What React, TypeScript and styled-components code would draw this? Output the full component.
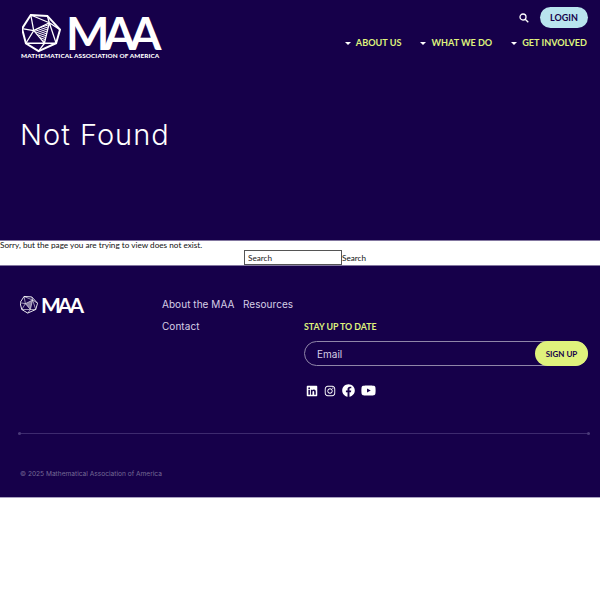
import React from 'react';
import styled, { createGlobalStyle } from 'styled-components';
import { FaFacebook, FaInstagram, FaLinkedin, FaYoutube } from 'react-icons/fa';

const PURPLE = '#16004a';
const LIME = '#dff27c';

const GlobalStyle = createGlobalStyle`
  html, body {
    margin: 0;
    background: #fff;
    font-family: Inter, 'Liberation Sans', sans-serif;
  }
  * {
    box-sizing: border-box;
  }
`;

const Header = styled.header`
  height: 240px;
  background: ${PURPLE};
  padding: 7px 12px 0 21px;
`;

const TopRow = styled.div`
  display: flex;
  justify-content: space-between;
  align-items: flex-start;
`;

const LogoLink = styled.a`
  display: flex;
  flex-direction: column;
  margin-top: 8px;
  color: #fff;
`;

const LogoMark = styled.div`
  display: flex;
  align-items: center;
  height: 37px;
  gap: 5px;
  padding-left: 1px;
`;

const LogoWord = styled.span<{ $size: number; $tight: number }>`
  display: block;
  font-family: Lato, 'Liberation Sans', sans-serif;
  font-weight: 700;
  font-size: ${({ $size }) => $size}px;
  line-height: 0.74;
  letter-spacing: ${({ $tight }) => $tight}px;
  color: #fff;
`;

const LogoTagline = styled.span`
  font-family: Lato, sans-serif;
  font-weight: 900;
  font-size: 6.4px;
  line-height: 8px;
  letter-spacing: 0.1px;
  white-space: nowrap;
`;

const NavColumn = styled.div`
  display: flex;
  flex-direction: column;
  align-items: flex-end;
`;

const UtilityRow = styled.div`
  display: flex;
  align-items: center;
  gap: 11px;
`;

const LoginButton = styled.button`
  width: 48px;
  height: 21px;
  padding: 0;
  border: none;
  border-radius: 11px;
  background: #b9e4ee;
  color: ${PURPLE};
  font-family: Lato, sans-serif;
  font-weight: 700;
  font-size: 9px;
`;

const NavList = styled.nav`
  display: flex;
  gap: 19px;
  margin-top: 8px;
  padding-right: 1px;
`;

const NavItem = styled.a`
  display: flex;
  align-items: center;
  gap: 5px;
  color: ${LIME};
  font-family: Lato, sans-serif;
  font-weight: 700;
  font-size: 9.1px;
  line-height: 14px;
  white-space: nowrap;

  &::before {
    content: '';
    border-left: 3px solid transparent;
    border-right: 3px solid transparent;
    border-top: 3px solid #fff;
  }
`;

const Title = styled.h1`
  margin: 55px 0 0 -1px;
  color: #fff;
  font-family: Inter, sans-serif;
  font-weight: 300;
  font-size: 29px;
  line-height: 40px;
  letter-spacing: 1px;
`;

const Main = styled.main`
  height: 26px;
  border-top: 1px solid #8377a0;
  border-bottom: 1px solid #8377a0;
  background: #fff;
  font-family: Lato, sans-serif;
  font-size: 8.2px;
  color: #111;
`;

const Message = styled.p`
  margin: 0;
  line-height: 9px;
`;

const SearchForm = styled.form`
  display: flex;
  align-items: center;
  height: 15px;
  padding-left: 244px;
`;

const SearchInput = styled.input`
  width: 98px;
  height: 15px;
  border: 1px solid #555;
  padding: 0 3px;
  font: inherit;
  background: #fff;
  &::placeholder {
    color: #222;
    opacity: 1;
  }
`;

const Footer = styled.footer`
  height: 232px;
  background: ${PURPLE};
  border-bottom: 1px solid #a9a1c0;
  padding: 30px 12px 0 20px;
`;

const FooterTop = styled.div`
  display: grid;
  grid-template-columns: 142px 142px 1fr;
  grid-template-rows: 22px 22px auto;
`;

const FooterLogo = styled.div`
  display: flex;
  align-items: center;
  gap: 3px;
  height: 18px;
  grid-row: 1;
  grid-column: 1;
`;

const FooterLinks = styled.div`
  display: grid;
  grid-column: 2 / 4;
  grid-row: 1;
  grid-template-columns: 81px auto;
  justify-content: start;
`;

const FooterLink = styled.a`
  display: block;
  color: #d6cfe6;
  font-family: Inter, sans-serif;
  font-size: 10px;
  line-height: 16px;
  letter-spacing: 0.05px;
  white-space: nowrap;
`;

const ContactCell = styled.div`
  grid-column: 2;
  grid-row: 2;
`;

const NewsletterCell = styled.div`
  grid-column: 3;
  grid-row: 2 / 4;
  padding-top: 2px;
`;

const NewsletterTitle = styled.div`
  color: ${LIME};
  font-family: Lato, sans-serif;
  font-weight: 700;
  font-size: 8.8px;
  line-height: 13px;
`;

const EmailField = styled.div`
  display: flex;
  justify-content: space-between;
  align-items: center;
  height: 25px;
  margin-top: 8px;
  padding-left: 12px;
  border: 1px solid #8f85a8;
  border-radius: 13px;
  color: #d6cfe6;
  font-family: Inter, sans-serif;
  font-size: 10px;
`;

const SignUpButton = styled.button`
  width: 53px;
  height: 25px;
  margin-right: -1px;
  padding: 0;
  border: none;
  border-radius: 13px;
  background: ${LIME};
  color: ${PURPLE};
  font-family: Lato, sans-serif;
  font-weight: 700;
  font-size: 8px;
`;

const SocialRow = styled.div`
  display: flex;
  align-items: center;
  gap: 6px;
  margin-top: 17px;
  padding-left: 2px;
  color: #fff;
`;

const Divider = styled.div`
  position: relative;
  height: 1px;
  margin: 35px -2px 0 -2px;
  background: #3d2a6e;

  &::before,
  &::after {
    content: '';
    position: absolute;
    top: -1px;
    width: 3px;
    height: 3px;
    border-radius: 50%;
    background: #4a3a78;
  }
  &::before {
    left: 0;
  }
  &::after {
    right: 0;
  }
`;

const Copyright = styled.p`
  margin: 36px 0 0;
  color: #756a95;
  font-family: Inter, sans-serif;
  font-size: 6.6px;
  line-height: 9px;
`;

const Polyhedron = ({ size, id }: { size: number; id: string }) => (
  <svg width={size} height={size} viewBox="0 0 40 40" fill="none" stroke="#fff" strokeWidth="1.3">
    <defs>
      <pattern id={id} width="2" height="2" patternUnits="userSpaceOnUse" patternTransform="rotate(20)">
        <rect width="2" height="1" fill="#fff" stroke="none" />
      </pattern>
    </defs>
    <polygon points="9,1 26,2 39,16 35,30 17,38 4,30 0,15" strokeWidth="2" />
    <polygon points="12,17 28,9 23,30" fill={`url(#${id})`} stroke="none" />
    <path d="M9 1 L28 9 L26 2 M28 9 L39 16 M28 9 L35 30 M28 9 L12 17 L23 30 L28 9 M23 30 L35 30 M23 30 L17 38 M12 17 L9 1 M12 17 L0 15 M12 17 L4 30 M4 30 L23 30" />
  </svg>
);

const SearchIcon = () => (
  <svg width="10" height="10" viewBox="0 0 10 10" fill="none" stroke="#fff" strokeWidth="1.3">
    <circle cx="4" cy="4" r="3" />
    <path d="M6.2 6.2 L9.3 9.3" />
  </svg>
);

export default function App() {
  return (
    <>
      <GlobalStyle />
      <Header>
        <TopRow>
          <LogoLink>
            <LogoMark>
              <Polyhedron size={39} id="hatch-top" />
              <LogoWord $size={46} $tight={-6}>MAA</LogoWord>
            </LogoMark>
            <LogoTagline>MATHEMATICAL ASSOCIATION OF AMERICA</LogoTagline>
          </LogoLink>
          <NavColumn>
            <UtilityRow>
              <SearchIcon />
              <LoginButton>LOGIN</LoginButton>
            </UtilityRow>
            <NavList>
              <NavItem>ABOUT US</NavItem>
              <NavItem>WHAT WE DO</NavItem>
              <NavItem>GET INVOLVED</NavItem>
            </NavList>
          </NavColumn>
        </TopRow>
        <Title>Not Found</Title>
      </Header>
      <Main>
        <Message>Sorry, but the page you are trying to view does not exist.</Message>
        <SearchForm>
          <SearchInput placeholder="Search" />
          <span>Search</span>
        </SearchForm>
      </Main>
      <Footer>
        <FooterTop>
          <FooterLogo>
            <Polyhedron size={18} id="hatch-foot" />
            <LogoWord $size={21} $tight={-3}>MAA</LogoWord>
          </FooterLogo>
          <FooterLinks>
            <FooterLink>About the MAA</FooterLink>
            <FooterLink>Resources</FooterLink>
          </FooterLinks>
          <ContactCell>
            <FooterLink>Contact</FooterLink>
          </ContactCell>
          <NewsletterCell>
            <NewsletterTitle>STAY UP TO DATE</NewsletterTitle>
            <EmailField>
              Email
              <SignUpButton>SIGN UP</SignUpButton>
            </EmailField>
            <SocialRow>
              <FaLinkedin size={12} />
              <FaInstagram size={12} />
              <FaFacebook size={13} />
              <FaYoutube size={15} />
            </SocialRow>
          </NewsletterCell>
        </FooterTop>
        <Divider />
        <Copyright>© 2025 Mathematical Association of America</Copyright>
      </Footer>
    </>
  );
}
